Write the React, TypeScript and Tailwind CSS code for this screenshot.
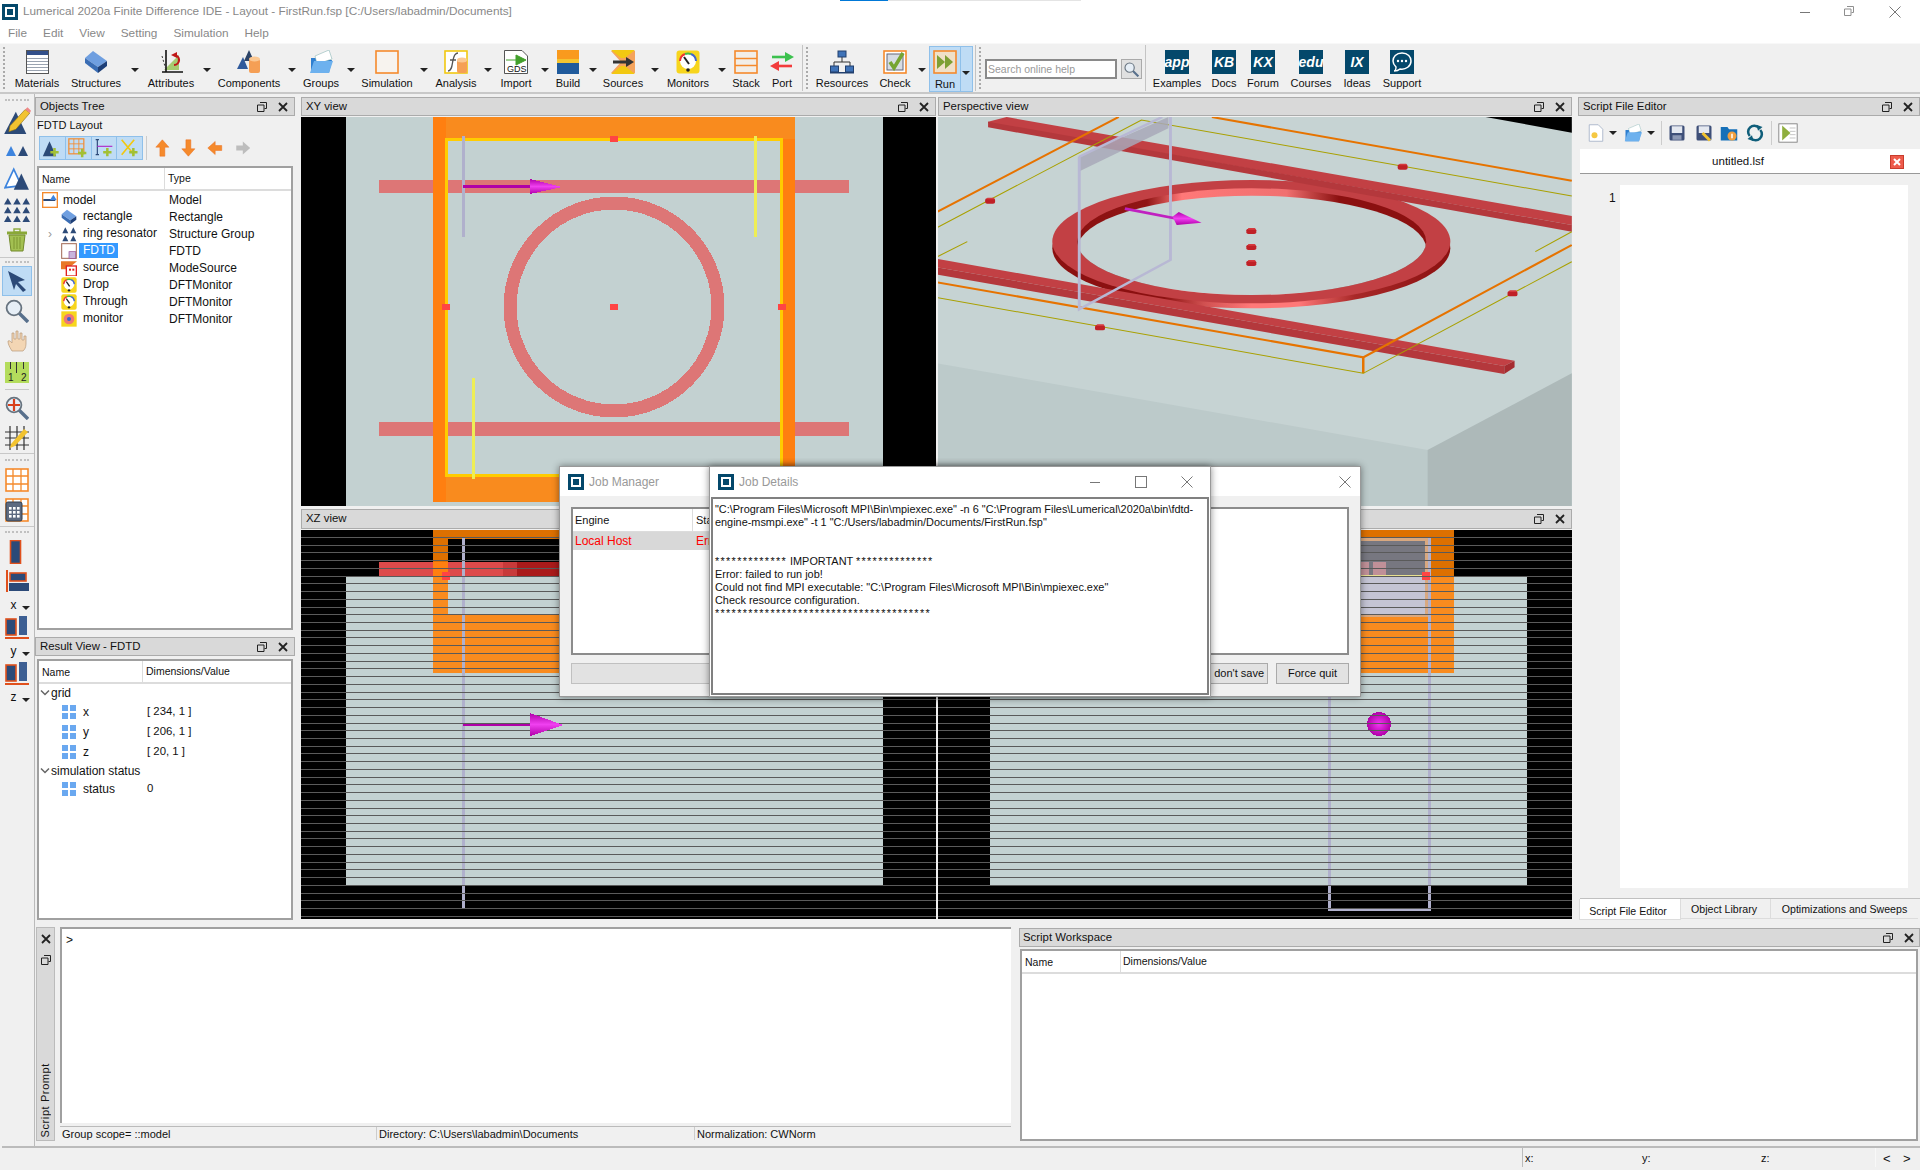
import React from 'react';

const Svg = ({ s = 24, v = 24, children, className }: { s?: number; v?: number; children: React.ReactNode; className?: string }) => (
  <svg width={s} height={s} viewBox={`0 0 ${v} ${v}`} className={`block shrink-0 ${className ?? ''}`}>{children}</svg>
);

const Logo = ({ s = 16 }: { s?: number }) => (
  <Svg s={s} v={16}>
    <rect width="16" height="16" fill="#04486b" />
    <rect x="3" y="3" width="10" height="10" fill="#fff" />
    <rect x="5" y="5" width="6" height="6" fill="#04486b" />
  </Svg>
);

// Toolbar icons
const Materials = () => (
  <Svg>
    <rect x="1.5" y="0.5" width="22" height="23" fill="#fff" stroke="#555" />
    <rect x="2" y="1" width="21" height="4" fill="#33508a" />
    {[8, 11, 14, 17, 20].map(y => <rect key={y} x="2" y={y} width="21" height="1" fill="#9aa3b0" />)}
  </Svg>
);
const Cuboid = ({ s = 24 }: { s?: number }) => (
  <Svg s={s}>
    <polygon points="1,8 9,1 23,11 14,17" fill="#6f9fe0" />
    <polygon points="1,8 14,17 14,23 1,13" fill="#3a6db4" />
    <polygon points="14,17 23,11 23,16 14,23" fill="#1d3f78" />
  </Svg>
);
const Attributes = () => (
  <Svg>
    <polygon points="5,20 20,20 20,5" fill="#a6cc70" />
    <path d="M7 0V22M3 22H24" stroke="#111" strokeWidth="1.6" fill="none" />
    <path d="M3 6L7 20" stroke="#333" strokeDasharray="2 2" fill="none" />
    <path d="M15 5A5 5 0 1 1 15 15" stroke="#c01818" strokeWidth="2.2" fill="none" />
    <polygon points="12,5 18,2 18,8" fill="#c01818" />
  </Svg>
);
const Components = () => (
  <Svg>
    <polygon points="0,19 6,7 11,19" fill="#2f5a9c" />
    <polygon points="7,11 12,0 17,11" fill="#2c4468" />
    <rect x="12" y="9" width="11" height="14" rx="2" fill="#f59f55" />
    <ellipse cx="17.5" cy="9" rx="5.5" ry="2.5" fill="#fbc893" />
  </Svg>
);
const Folder = ({ s = 24 }: { s?: number }) => (
  <Svg s={s}>
    <polygon points="2,8 2,23 20,23 23,10 10,10 8,8" fill="#2f7fd0" />
    <polygon points="6,6 20,0 23,9 8,14" fill="#fff" stroke="#7aa" strokeWidth=".5" />
    <polygon points="1,23 5,11 24,11 20,23" fill="#6db1ee" />
  </Svg>
);
const Simulation = () => (
  <Svg>
    <rect x="1" y="1" width="22" height="22" fill="#f7f3ee" stroke="#f58a2c" strokeWidth="1.6" />
  </Svg>
);
const Analysis = () => (
  <Svg>
    <rect x="1" y="1" width="22" height="22" fill="#fff" stroke="#f2c811" strokeWidth="1.6" />
    <path d="M4 21C8 21 8 15 9 10S11 3 14 3M6 10H12" stroke="#555" strokeWidth="1.3" fill="none" />
    <rect x="13" y="10" width="10" height="13" rx="2" fill="#f59f55" />
    <ellipse cx="18" cy="10" rx="5" ry="2.5" fill="#fbc893" />
  </Svg>
);
const Import = () => (
  <div className="relative w-6 h-6">
    <Svg>
      <polygon points="0.5,0.5 18,0.5 23.5,6 23.5,23.5 0.5,23.5" fill="#fff" stroke="#555" />
      <path d="M2 10H12V5L22 10L12 15V10" fill="#43a02c" stroke="#43a02c" />
    </Svg>
    <span className="absolute left-[3px] top-[14px] text-[9px] leading-[10px]">GDS</span>
  </div>
);
const Build = () => (
  <Svg>
    <rect x="1" y="0" width="22" height="12" fill="#f99a1e" />
    <rect x="1" y="9" width="22" height="4" fill="#f4c430" />
    <rect x="1" y="13" width="22" height="11" fill="#1f5a9c" />
  </Svg>
);
const Sources = () => (
  <Svg>
    <polygon points="0,1 24,1 24,23 0,23 10,12" fill="#f5a35c" />
    <polygon points="0,0 24,0 14,8 10,8" fill="#f2c811" />
    <polygon points="0,24 24,24 14,16 10,16" fill="#f2c811" />
    <path d="M2 12H16" stroke="#333" strokeWidth="3" />
    <polygon points="15,7 23,12 15,17" fill="#333" />
  </Svg>
);
const Gauge = ({ s = 24 }: { s?: number }) => (
  <Svg s={s}>
    <rect x="0.5" y="0.5" width="23" height="23" rx="3" fill="#f7d51d" />
    <circle cx="12" cy="11" r="8" fill="#fff" />
    <path d="M4 11A8 8 0 0 1 9 4" stroke="#e33" strokeWidth="2" fill="none" />
    <path d="M9 4A8 8 0 0 1 15 4" stroke="#4b4" strokeWidth="2" fill="none" />
    <path d="M15 4A8 8 0 0 1 20 11" stroke="#46c" strokeWidth="2" fill="none" />
    <path d="M8 7L13 14" stroke="#222" strokeWidth="2" />
    <circle cx="12" cy="20" r="1.8" fill="#222" />
  </Svg>
);
const Stack = () => (
  <Svg>
    <rect x="1" y="1" width="22" height="22" fill="#f2eee8" stroke="#f58a2c" strokeWidth="1.6" />
    <path d="M1 8.5H23M1 15.5H23" stroke="#f58a2c" strokeWidth="1.6" />
  </Svg>
);
const Port = () => (
  <Svg>
    <path d="M2 7H16" stroke="#3cc14e" strokeWidth="2.6" />
    <polygon points="15,2 24,7 15,12" fill="#3cc14e" />
    <path d="M8 16H22" stroke="#f23b3b" strokeWidth="2.6" />
    <polygon points="9,11 0,16 9,21" fill="#f23b3b" />
  </Svg>
);
const Resources = () => (
  <Svg>
    <path d="M12 6V12M4 18V12H20V18" stroke="#333" fill="none" />
    <rect x="8" y="1" width="8" height="6" fill="#3f73b8" stroke="#22406e" />
    <rect x="0.5" y="16" width="8" height="6" fill="#3f73b8" stroke="#22406e" />
    <rect x="15.5" y="16" width="8" height="6" fill="#3f73b8" stroke="#22406e" />
    <rect x="0" y="22" width="24" height="1.5" fill="#22406e" />
  </Svg>
);
const Check = () => (
  <Svg>
    <rect x="1" y="1" width="22" height="22" fill="#fff" stroke="#f58a2c" strokeWidth="1.6" />
    <rect x="4" y="4" width="16" height="16" fill="#d7dce4" stroke="#667" />
    <path d="M7 12L11 18L20 3" stroke="#76a532" strokeWidth="3.6" fill="none" />
  </Svg>
);
const RunIcon = () => (
  <Svg>
    <rect x="1" y="1" width="22" height="22" fill="#f0e0c8" stroke="#f58a2c" strokeWidth="1.6" />
    <polygon points="4,5 12,12 4,19" fill="#7e9f34" />
    <polygon points="12,5 20,12 12,19" fill="#7e9f34" />
  </Svg>
);
const Mag = ({ s = 24 }: { s?: number }) => (
  <Svg s={s}>
    <path d="M14 14L23 23" stroke="#58708c" strokeWidth="3.4" />
    <circle cx="9" cy="9" r="7.4" fill="#e6eef6" stroke="#67737f" strokeWidth="1.8" />
  </Svg>
);
const Square = ({ t }: { t: string }) => (
  <div className="w-6 h-6 bg-[#04486b] flex items-center justify-center text-white font-bold italic text-[14px] leading-none">{t}</div>
);
const Support = () => (
  <Svg>
    <rect width="24" height="24" fill="#04486b" />
    <path d="M12 3C6 3 3 7 3 11C3 14 5 16 6 17C6 19 5 21 4 21C7 21 9 20 10 19C16 20 21 16 21 11C21 7 18 3 12 3Z" fill="none" stroke="#fff" strokeWidth="1.5" />
    <circle cx="8" cy="11" r="1.2" fill="#fff" /><circle cx="12" cy="11" r="1.2" fill="#fff" /><circle cx="16" cy="11" r="1.2" fill="#fff" />
  </Svg>
);

// Left toolbar icons
const Tri = ({ x, y, w, h, fill }: { x: number; y: number; w: number; h: number; fill: string }) => (
  <polygon points={`${x},${y + h} ${x + w / 2},${y} ${x + w},${y + h}`} fill={fill} />
);
const PencilTri = () => (
  <Svg s={28}>
    <polygon points="1,24 11,5 20,24" fill="#2c4a78" />
    <path d="M6 17L19 3L23 6L11 20L5 22Z" fill="#f2c330" stroke="#8a6a10" strokeWidth=".5" />
    <path d="M19 3L21 1L24 4L23 6Z" fill="#e88" />
  </Svg>
);
const TwoTri = () => (
  <Svg s={24}>
    <Tri x={1} y={8} w={10} h={10} fill="#3d84de" />
    <Tri x={13} y={8} w={10} h={10} fill="#2c4a78" />
  </Svg>
);
const OutTri = () => (
  <Svg s={26} v={24}>
    <polygon points="1,20 9,3 16,18" fill="#fff" stroke="#3d84de" strokeWidth="1.6" />
    <Tri x={9} y={7} w={14} h={15} fill="#2c4a78" />
  </Svg>
);
const ManyTri = () => (
  <Svg s={26} v={24}>
    {[1, 9, 17].map(y => [0, 8.5, 17].map(x => <Tri key={`${x}${y}`} x={x} y={y} w={7} h={6} fill="#2c4a78" />))}
  </Svg>
);
const Trash = () => (
  <Svg s={24}>
    <path d="M2 5H22" stroke="#8aa838" strokeWidth="3" />
    <rect x="9" y="1" width="6" height="3" fill="none" stroke="#8aa838" strokeWidth="1.4" />
    <polygon points="4,7 20,7 18,23 6,23" fill="#a3c052" stroke="#728a2a" />
    <path d="M9 9V21M12 9V21M15 9V21" stroke="#7c9530" />
  </Svg>
);
const Pointer = () => (
  <Svg s={24}>
    <polygon points="3,2 20,11 13,13 21,21 18,23 11,15 9,21" fill="#2c4a78" />
  </Svg>
);
const Hand = () => (
  <Svg s={24}>
    <path d="M7 22C4 17 3 15 3 12C5 11 6 13 7 14V4H9V10H11V2H13V10H15V4H17V11H19V7H21V15C21 19 19 21 18 22Z" fill="#f3d6b4" stroke="#b89a7a" strokeWidth=".7" />
  </Svg>
);
const Ruler = () => (
  <div className="relative w-6 h-[21px] bg-[#b4dc5c]">
    <div className="absolute left-[5px] top-0 w-px h-[7px] bg-[#333]" />
    <div className="absolute left-[11px] top-0 w-px h-[11px] bg-[#333]" />
    <div className="absolute left-[18px] top-0 w-px h-[7px] bg-[#333]" />
    <span className="absolute left-[3px] bottom-0 text-[10px] leading-[11px] text-[#222]">1</span>
    <span className="absolute left-[16px] bottom-0 text-[10px] leading-[11px] text-[#222]">2</span>
  </div>
);
const MagMove = () => (
  <Svg s={24}>
    <path d="M14 14L23 23" stroke="#58708c" strokeWidth="3.4" />
    <circle cx="9" cy="9" r="7.4" fill="#e6eef6" stroke="#67737f" strokeWidth="1.8" />
    <path d="M9 3V15M3 9H15" stroke="#d8401c" strokeWidth="2.2" />
  </Svg>
);
const GridPencil = () => (
  <Svg s={24}>
    <path d="M0 6H24M0 12H24M0 19H24M5 0V24M12 0V24M19 0V24" stroke="#333" strokeWidth="1.2" />
    <path d="M6 18L19 3L23 6L10 20L5 22Z" fill="#f2c330" />
  </Svg>
);
const OrangeGrid = ({ calc }: { calc?: boolean }) => (
  <Svg s={24}>
    <rect x="1" y="1" width="22" height="22" fill="#fff" stroke="#f58a2c" strokeWidth="1.6" />
    <path d="M8 1V23M16 1V23M1 8H23M1 16H23" stroke="#f58a2c" strokeWidth="1.3" />
    {calc && (
      <>
        <rect x="1" y="4" width="16" height="19" rx="2" fill="#5d6a80" stroke="#333e50" />
        {[9, 13, 17].map(y => [4, 8, 12].map(x => <rect key={`${x}${y}`} x={x} y={y} width="2.6" height="2.6" fill="#fff" />))}
      </>
    )}
  </Svg>
);
const Bars = ({ kind }: { kind: number }) => (
  <Svg s={24}>
    {kind === 0 && <rect x="5.5" y="0.5" width="10" height="23" fill="#2c4a78" stroke="#e0501c" strokeWidth="1.6" />}
    {kind === 1 && (
      <>
        <rect x="1" y="0" width="2" height="22" fill="#e0501c" />
        <rect x="5" y="3" width="16" height="8" fill="#2c4a78" stroke="#e0501c" strokeWidth="1.6" />
        <rect x="4" y="13" width="20" height="8" fill="#2c4a78" />
      </>
    )}
    {kind === 2 && (
      <>
        <rect x="1" y="3" width="10" height="16" fill="#2c4a78" stroke="#e0501c" strokeWidth="1.6" />
        <rect x="14" y="0" width="8" height="19" fill="#3d5f93" />
        <rect x="0" y="21" width="24" height="2" fill="#e0501c" />
      </>
    )}
  </Svg>
);

const Grip = () => <div className="w-[3px] self-center h-[42px] border-l-2 border-dotted border-[#aaa]" />;
const Sep = () => <div className="self-center w-px h-[46px] bg-[#c4c4c4]" />;
const Caret = ({ className }: { className?: string }) => (
  <div className={`self-start mt-[24px] w-[10px] flex justify-center ${className ?? ''}`}>
    <div className="border-x-[4px] border-t-[4px] border-x-transparent border-t-[#222]" />
  </div>
);
const Tool = ({ icon, label, className }: { icon: React.ReactNode; label: string; className: string }) => (
  <div className={`flex flex-col items-center pt-[6px] shrink-0 ${className}`}>
    {icon}
    <span className="mt-[2px] whitespace-nowrap leading-[14px]">{label}</span>
  </div>
);

const TopToolbar = () => (
  <div className="h-[51px] flex bg-[#f0f0f0] border-b-2 border-t border-t-[#f8f8f8] border-b-[#c8c8c8] text-[11px] pl-[3px]">
    <Grip />
    <Tool className="w-[46px] ml-[8px]" icon={<Materials />} label="Materials" />
    <Tool className="w-[60px] ml-[6px]" icon={<Cuboid />} label="Structures" />
    <Caret className="ml-[4px]" />
    <Tool className="w-[54px] ml-[4px]" icon={<Attributes />} label="Attributes" />
    <Caret className="ml-[4px]" />
    <Tool className="w-[70px] ml-[2px]" icon={<Components />} label="Components" />
    <Caret className="ml-[3px]" />
    <Tool className="w-[36px] ml-[6px]" icon={<Folder />} label="Groups" />
    <Caret className="ml-[7px]" />
    <Tool className="w-[52px] ml-[5px]" icon={<Simulation />} label="Simulation" />
    <Caret className="ml-[6px]" />
    <Tool className="w-[42px] ml-[6px]" icon={<Analysis />} label="Analysis" />
    <Caret className="ml-[6px]" />
    <Tool className="w-[34px] ml-[6px]" icon={<Import />} label="Import" />
    <Caret className="ml-[7px]" />
    <Tool className="w-[24px] ml-[6px]" icon={<Build />} label="Build" />
    <Caret className="ml-[8px]" />
    <Tool className="w-[42px] ml-[4px]" icon={<Sources />} label="Sources" />
    <Caret className="ml-[6px]" />
    <Tool className="w-[46px] ml-[5px]" icon={<Gauge />} label="Monitors" />
    <Caret className="ml-[6px]" />
    <Tool className="w-[34px] ml-[2px]" icon={<Stack />} label="Stack" />
    <Tool className="w-[24px] ml-[7px]" icon={<Port />} label="Port" />
    <div className="ml-[8px] flex"><Sep /></div>
    <div className="ml-[3px] flex"><Grip /></div>
    <Tool className="w-[54px] ml-[6px]" icon={<Resources />} label="Resources" />
    <Tool className="w-[34px] ml-[9px]" icon={<Check />} label="Check" />
    <Caret className="ml-[5px]" />
    <div className="ml-[2px] mt-[2px] w-[44px] h-[46px] flex bg-[#bfdcf5] border border-[#8fc0ea] shrink-0">
      <div className="w-[31px] flex flex-col items-center pt-[3px] border-r border-[#8fc0ea]">
        <RunIcon />
        <span className="mt-[3px] leading-[14px]">Run</span>
      </div>
      <Caret />
    </div>
    <div className="ml-[2px] flex"><Sep /></div>
    <div className="ml-[3px] flex"><Grip /></div>
    <div className="ml-[3px] mt-[15px] w-[132px] h-[20px] shrink-0 bg-white border-2 border-[#8a8a8a] text-[#999] text-[10.5px] pl-[1px] leading-[16px]">Search online help</div>
    <div className="ml-[4px] mt-[15px] w-[21px] h-[20px] shrink-0 bg-[#e0e0e0] border border-[#aaa] flex items-center justify-center"><Mag s={15} /></div>
    <div className="ml-[3px] flex"><Sep /></div>
    <Tool className="w-[50px] ml-[6px]" icon={<Square t="app" />} label="Examples" />
    <Tool className="w-[28px] ml-[8px]" icon={<Square t="KB" />} label="Docs" />
    <Tool className="w-[34px] ml-[8px]" icon={<Square t="KX" />} label="Forum" />
    <Tool className="w-[42px] ml-[10px]" icon={<Square t="edu" />} label="Courses" />
    <Tool className="w-[30px] ml-[10px]" icon={<Square t="IX" />} label="Ideas" />
    <Tool className="w-[42px] ml-[9px]" icon={<Support />} label="Support" />
  </div>
);

const LeftCell = ({ h, children, active }: { h: string; children: React.ReactNode; active?: boolean }) => (
  <div className={`${h} flex items-center justify-center shrink-0 ${active ? 'bg-[#bfdcf5] border border-[#8fc0ea] mx-[2px]' : ''}`}>{children}</div>
);
const Dots = () => <div className="w-[24px] border-t-2 border-dotted border-[#c0c0c0]" />;
const AxisLabel = ({ t }: { t: string }) => (
  <div className="h-[16px] flex items-center justify-center gap-[5px] pl-[6px] text-[12px] leading-none">
    {t}
    <div className="mt-[6px] border-x-[4px] border-t-[4px] border-x-transparent border-t-[#222]" />
  </div>
);
const LeftToolbar = () => (
  <div className="w-[35px] shrink-0 border-r border-[#bbb] flex flex-col pt-[2px]">
    <LeftCell h="h-[8px]"><Dots /></LeftCell>
    <LeftCell h="h-[32px]"><PencilTri /></LeftCell>
    <LeftCell h="h-[28px]"><TwoTri /></LeftCell>
    <LeftCell h="h-[30px]"><OutTri /></LeftCell>
    <LeftCell h="h-[32px]"><ManyTri /></LeftCell>
    <LeftCell h="h-[28px]"><Trash /></LeftCell>
    <div className="h-[4px] border-b border-[#c8c8c8]" />
    <LeftCell h="h-[8px]"><Dots /></LeftCell>
    <LeftCell h="h-[30px]" active><Pointer /></LeftCell>
    <LeftCell h="h-[30px]"><Mag /></LeftCell>
    <LeftCell h="h-[30px]"><Hand /></LeftCell>
    <LeftCell h="h-[32px]"><Ruler /></LeftCell>
    <div className="h-[2px] mx-[5px] border-b border-[#c8c8c8]" />
    <LeftCell h="h-[36px]"><MagMove /></LeftCell>
    <LeftCell h="h-[24px]"><GridPencil /></LeftCell>
    <div className="h-[4px] border-b border-[#c8c8c8]" />
    <LeftCell h="h-[12px]"><Dots /></LeftCell>
    <LeftCell h="h-[28px]"><OrangeGrid /></LeftCell>
    <LeftCell h="h-[32px]"><OrangeGrid calc /></LeftCell>
    <div className="h-px border-b border-[#c8c8c8]" />
    <LeftCell h="h-[10px]"><Dots /></LeftCell>
    <LeftCell h="h-[30px]"><Bars kind={0} /></LeftCell>
    <LeftCell h="h-[30px]"><Bars kind={1} /></LeftCell>
    <AxisLabel t="x" />
    <LeftCell h="h-[30px]"><Bars kind={2} /></LeftCell>
    <AxisLabel t="y" />
    <LeftCell h="h-[30px]"><Bars kind={2} /></LeftCell>
    <AxisLabel t="z" />
  </div>
);

const Restore = ({ className }: { className?: string }) => (
  <svg width="10" height="10" viewBox="0 0 10 10" className={`block shrink-0 ${className ?? ''}`}>
    <path d="M3 .5H9.5V6.5H7.5M.5 3H7V9.5H.5Z" fill="none" stroke="#222" />
  </svg>
);
const XMark = ({ className }: { className?: string }) => (
  <svg width="10" height="10" viewBox="0 0 10 10" className={`block shrink-0 ${className ?? ''}`}>
    <path d="M1 1L9 9M9 1L1 9" stroke="#222" strokeWidth="1.8" />
  </svg>
);
const PanelTitle = ({ title, className }: { title: string; className?: string }) => (
  <div className={`h-[19px] shrink-0 flex items-center bg-[#d9d9d9] border border-[#ababab] px-[4px] text-[11.4px] leading-none ${className ?? ''}`}>
    <span className="flex-1 whitespace-nowrap">{title}</span>
    <Restore className="mr-[11px]" />
    <XMark className="mr-[2px]" />
  </div>
);

const TreeIcon = ({ kind }: { kind: string }) => {
  if (kind === 'rect') return <Cuboid s={16} />;
  if (kind === 'group') return <Svg s={16} v={24}>{[2, 14].map(y => [2, 14].map(x => <Tri key={`${x}${y}`} x={x} y={y} w={9} h={9} fill="#2c4a78" />))}</Svg>;
  if (kind === 'fdtd') return <Svg s={16}><rect x="1" y="1" width="22" height="22" fill="#fff" stroke="#a6705c" strokeWidth="1.6" /><rect x="12" y="13" width="10" height="10" fill="#c8b4dc" stroke="#924d92" /></Svg>;
  if (kind === 'source') return <Svg s={16}><polygon points="0,2 24,2 14,10 24,14 0,14" fill="#e87826" /><rect x="8" y="9" width="15" height="15" fill="#fff" stroke="#e02020" strokeWidth="2" /><rect x="12" y="13" width="3" height="3" fill="#e02020" /><rect x="17" y="13" width="3" height="3" fill="#e02020" /></Svg>;
  if (kind === 'monitor') return <Svg s={16}><rect x="0.5" y="0.5" width="23" height="23" fill="#f7d51d" /><circle cx="12" cy="12" r="8" fill="#ee7777" /><circle cx="12" cy="12" r="3" fill="#3366cc" /></Svg>;
  return <Gauge s={16} />;
};

const TreeRow = ({ icon, name, type, arrow, selected }: { icon: string; name: string; type: string; arrow?: boolean; selected?: boolean }) => (
  <div className="h-[17px] flex items-center">
    <div className="w-[22px] flex justify-center text-[#999] text-[12px]">{arrow ? '›' : ''}</div>
    <TreeIcon kind={icon} />
    <span className="ml-[2px] w-[90px] px-[4px] leading-[15px] whitespace-nowrap">
      {selected ? <span className="inline-block bg-[#3399ff] text-white w-[39px] -ml-[4px] pl-[4px]">{name}</span> : name}
    </span>
    <span>{type}</span>
  </div>
);

const ObjectsTree = () => (
  <div className="h-[533px] flex flex-col">
    <PanelTitle title="Objects Tree" />
    <div className="h-[19px] pl-[2px] leading-[19px] text-[11px]">FDTD Layout</div>
    <div className="h-[24px] mt-px flex items-center pl-[4px]">
      <div className="flex h-[24px] bg-[#bfdcf5] border border-[#8fc0ea] w-[104px]">
        <div className="w-[26px] flex justify-center items-center border-r border-[#8fc0ea]"><Svg s={20}><Tri x={1} y={4} w={16} h={18} fill="#2c4a78" /><path d="M15 12V22M10 17H20" stroke="#a2c035" strokeWidth="3" /></Svg></div>
        <div className="w-[26px] flex justify-center items-center border-r border-[#8fc0ea]"><Svg s={20}><rect x="1" y="1" width="18" height="18" fill="none" stroke="#f58a2c" strokeWidth="1.4" /><path d="M7 1V19M13 1V19M1 7H19M1 13H19" stroke="#f58a2c" /><path d="M17 13V23M12 18H22" stroke="#a2c035" strokeWidth="3" /></Svg></div>
        <div className="w-[26px] flex justify-center items-center border-r border-[#8fc0ea]"><Svg s={20}><path d="M4 2V20M2 2H6M2 20H6" stroke="#2c4a78" strokeWidth="1.4" /><path d="M4 10H22" stroke="#b030c8" strokeWidth="1.4" /><path d="M16 12V22M11 17H21" stroke="#a2c035" strokeWidth="3" /></Svg></div>
        <div className="w-[25px] flex justify-center items-center"><Svg s={20}><path d="M2 2L17 20M17 2L2 20" stroke="#f2c811" strokeWidth="2" /><path d="M16 12V22M11 17H21" stroke="#a2c035" strokeWidth="3" /></Svg></div>
      </div>
      <div className="ml-[3px] w-px h-[24px] bg-[#ccc]" />
      {['M9 1L17 10H12V21H6V10H1Z', 'M6 1H12V12H17L9 21L1 12H6Z', 'M1 11L10 3V8H18V14H10V19Z'].map(d => (
        <Svg key={d} s={18} v={22} className="ml-[8px]"><path d={d} fill="#f58a2c" stroke="#ea6a18" strokeWidth=".6" /></Svg>
      ))}
      <Svg s={18} v={22} className="ml-[8px]"><path d="M21 11L12 3V8H4V14H12V19Z" fill="#bdbdbd" /></Svg>
    </div>
    <div className="mt-[6px] ml-[2px] w-[256px] flex-1 bg-white border-2 border-[#a0a0a0]">
      <div className="h-[23px] flex items-center border-b-2 border-[#dcdcdc] text-[10.5px]">
        <span className="w-[126px] pl-[3px] border-r border-[#dcdcdc] h-full leading-[22px]">Name</span>
        <span className="pl-[3px]">Type</span>
      </div>
      <div>
        <div className="h-[17px] flex items-center">
          <div className="w-[3px]" />
          <Svg s={16}><rect x="1" y="1" width="22" height="22" fill="#fff" stroke="#f58a2c" strokeWidth="2" /><path d="M2 12H20" stroke="#2c4a78" strokeWidth="3" /><Tri x={12} y={4} w={10} h={8} fill="#3d84de" /></Svg>
          <span className="ml-[5px] w-[106px]">model</span>
          <span>Model</span>
        </div>
        <TreeRow icon="rect" name="rectangle" type="Rectangle" />
        <TreeRow icon="group" name="ring resonator" type="Structure Group" arrow />
        <TreeRow icon="fdtd" name="FDTD" type="FDTD" selected />
        <TreeRow icon="source" name="source" type="ModeSource" />
        <TreeRow icon="gauge" name="Drop" type="DFTMonitor" />
        <TreeRow icon="gauge" name="Through" type="DFTMonitor" />
        <TreeRow icon="monitor" name="monitor" type="DFTMonitor" />
      </div>
    </div>
  </div>
);

const Chev = () => (
  <svg width="10" height="8" viewBox="0 0 10 8" className="block shrink-0"><path d="M1 1.5L5 5.5L9 1.5" fill="none" stroke="#666" strokeWidth="1.5" /></svg>
);
const ResultLeaf = ({ name, value, h }: { name: string; value: string; h: string }) => (
  <div className={`${h} flex items-center pl-[23px]`}>
    <div className="grid grid-cols-2 gap-[2px] w-[14px] h-[14px] shrink-0">
      <div className="bg-[#6aa8f0]" /><div className="bg-[#6aa8f0]" /><div className="bg-[#6aa8f0]" /><div className="bg-[#6aa8f0]" />
    </div>
    <span className="ml-[7px] w-[64px]">{name}</span>
    <span className="text-[11.4px]">{value}</span>
  </div>
);
const ResultBranch = ({ name, h }: { name: string; h: string }) => (
  <div className={`${h} flex items-center pl-[1px]`}>
    <Chev /><span className="ml-[1px]">{name}</span>
  </div>
);
const ResultView = () => (
  <div className="flex-1 flex flex-col mt-[7px]">
    <PanelTitle title="Result View - FDTD" />
    <div className="mt-[3px] mb-px ml-[2px] w-[256px] flex-1 bg-white border-2 border-[#a0a0a0]">
      <div className="h-[23px] flex items-center border-b-2 border-[#dcdcdc] text-[10.5px]">
        <span className="w-[104px] pl-[3px] border-r border-[#dcdcdc] h-full leading-[22px]">Name</span>
        <span className="pl-[3px]">Dimensions/Value</span>
      </div>
      <ResultBranch name="grid" h="h-[18px]" />
      <ResultLeaf name="x" value="[ 234, 1 ]" h="h-[20px]" />
      <ResultLeaf name="y" value="[ 206, 1 ]" h="h-[20px]" />
      <ResultLeaf name="z" value="[ 20, 1 ]" h="h-[20px]" />
      <ResultBranch name="simulation status" h="h-[17px]" />
      <ResultLeaf name="status" value="0" h="h-[19px]" />
    </div>
  </div>
);

const Defs = () => (
  <defs>
    <linearGradient id="head" x1="0" y1="0" x2="0" y2="1">
      <stop offset="0" stopColor="#b000a8" />
      <stop offset=".5" stopColor="#f040f0" />
      <stop offset="1" stopColor="#b000a8" />
    </linearGradient>
    <radialGradient id="ball">
      <stop offset="0" stopColor="#f038f0" />
      <stop offset="1" stopColor="#b000a8" />
    </radialGradient>
    <linearGradient id="ringOut" x1="0" y1="0" x2="1" y2="0">
      <stop offset="0" stopColor="#8b1010" />
      <stop offset=".28" stopColor="#8b1010" />
      <stop offset=".38" stopColor="#d05050" />
      <stop offset=".5" stopColor="#ff7878" />
      <stop offset=".62" stopColor="#ff7878" />
      <stop offset=".76" stopColor="#a82828" />
      <stop offset="1" stopColor="#8b1010" />
    </linearGradient>
    <linearGradient id="ringIn" x1="0" y1="0" x2="1" y2="0">
      <stop offset="0" stopColor="#8b1010" />
      <stop offset=".2" stopColor="#901515" />
      <stop offset=".3" stopColor="#ff7878" />
      <stop offset=".6" stopColor="#f07070" />
      <stop offset=".75" stopColor="#8b1010" />
      <stop offset="1" stopColor="#8b1010" />
    </linearGradient>
    <clipPath id="holeClip"><ellipse cx="776" cy="395" rx="421" ry="160" /></clipPath>
  </defs>
);

const Handle = ({ x, y }: { x: number; y: number }) => <rect x={x - 4} y={y - 3} width="8" height="6" fill="#ff4444" />;

const XYDrawing = () => (
  <svg viewBox="301 117 635 389" className="block w-[635px] h-[389px]" shapeRendering="crispEdges">
    <Defs />
    <rect x="301" y="117" width="635" height="389" fill="#000" />
    <rect x="346" y="117" width="537" height="389" fill="#c3d1d1" />
    <rect x="433" y="117" width="362" height="385" fill="#f98b1e" />
    <rect x="433" y="117" width="13" height="385" fill="#ff7f10" />
    <rect x="782" y="139" width="13" height="363" fill="#ff7f10" />
    <rect x="446" y="139" width="336" height="336" fill="#c3d1d1" />
    <rect x="379" y="180" width="470" height="13" fill="#dd7676" />
    <rect x="379" y="422" width="470" height="14" fill="#dd7676" />
    {[180, 422].map(y => (
      <g key={y}>
        <rect x="433" y={y} width="13" height="14" fill="#ff7f10" />
        <rect x="782" y={y} width="13" height="14" fill="#ff7f10" />
      </g>
    ))}
    <circle cx="614" cy="307" r="104" fill="none" stroke="#dd7676" strokeWidth="13" />
    <rect x="446.5" y="139.5" width="335" height="335.5" fill="none" stroke="#ffcc00" strokeWidth="3" />
    <rect x="462" y="136" width="3" height="101" fill="#b0b0cc" />
    <rect x="754" y="136" width="3" height="101" fill="#eeee55" />
    <rect x="472" y="378" width="3" height="101" fill="#eeee55" />
    <Handle x={614} y={139} /><Handle x={446} y={307} /><Handle x={782} y={307} /><Handle x={614} y={307} />
    <rect x="463" y="185" width="68" height="3" fill="#b000a8" />
    <polygon points="530,179 562,187 530,194" fill="url(#head)" />
  </svg>
);

const Stripes = ({ x }: { x: number }) => (
  <>
    {Array.from({ length: 50 }, (_, i) => (
      <rect key={i} x={x} y={537 + Math.round(i * 7.73)} width="636" height="1" fill="#5a5a5a" />
    ))}
  </>
);

const XZDrawing = () => (
  <svg viewBox="301 530 635 389" className="block w-[635px] h-[389px]" shapeRendering="crispEdges">
    <Defs />
    <rect x="301" y="530" width="635" height="389" fill="#000" />
    <rect x="346" y="577" width="537" height="309" fill="#c3d1d1" />
    <rect x="379" y="562" width="260" height="14" fill="#dd4a4a" />
    <rect x="503" y="562" width="14" height="14" fill="#c83a3a" />
    <rect x="517" y="562" width="46" height="14" fill="#aa1a1a" />
    <rect x="433" y="530" width="362" height="9" fill="#dd7000" />
    <rect x="433" y="539" width="15" height="38" fill="#dd7000" />
    <rect x="433" y="562" width="15" height="14" fill="#ff7f10" />
    <rect x="433" y="577" width="15" height="37" fill="#f98b1e" />
    <rect x="433" y="614" width="362" height="59" fill="#f98b1e" />
    <rect x="448" y="576" width="334" height="1" fill="#e8e040" />
    <rect x="462" y="538" width="3" height="371" fill="#b0b0cc" />
    <rect x="442" y="572" width="8" height="8" fill="#ff4444" />
    <Stripes x={301} />
    <rect x="463" y="724" width="68" height="2" fill="#b000a8" />
    <polygon points="530,713 563,725 530,736" fill="url(#head)" />
  </svg>
);

const YZDrawing = () => (
  <svg viewBox="938 530 634 389" className="block w-[634px] h-[389px]" shapeRendering="crispEdges">
    <Defs />
    <rect x="938" y="530" width="634" height="389" fill="#000" />
    <rect x="990" y="577" width="537" height="309" fill="#c3d1d1" />
    <rect x="1062" y="530" width="392" height="47" fill="#dd7000" />
    <rect x="1062" y="577" width="392" height="96" fill="#f98b1e" />
    <rect x="1062" y="538" width="367" height="79" fill="#d8a880" />
    <rect x="1062" y="541" width="363" height="36" fill="#777780" />
    <rect x="1062" y="577" width="363" height="37" fill="#c4c4d4" />
    <rect x="1360" y="562" width="9" height="13" fill="#c09098" />
    <rect x="1373" y="562" width="13" height="13" fill="#c09098" />
    <rect x="1062" y="575" width="363" height="1" fill="#e8e090" />
    <rect x="1328" y="538" width="3" height="372" fill="#b0b0cc" />
    <rect x="1428" y="538" width="3" height="372" fill="#b0b0cc" />
    <rect x="1328" y="909" width="103" height="2" fill="#b0b0cc" />
    <rect x="1422" y="572" width="8" height="8" fill="#ff4444" />
    <circle cx="1379" cy="724" r="12" fill="url(#ball)" />
    <Stripes x={938} />
  </svg>
);

const DotP = ({ x, y }: { x: number; y: number }) => (
  <>
    <rect x={x - 12} y={y - 7} width="24" height="16" rx="5" fill="#c02026" />
    <rect x={x - 8} y={y - 9} width="18" height="5" rx="2" fill="#d63a3e" />
  </>
);
// drawn in the coordinates of the 2.412 x 3 crop, scaled down by the group transform
const Perspective = () => (
  <svg viewBox="938 117 634 389" className="block w-[634px] h-[389px]">
    <Defs />
    <g transform="translate(930 110) scale(0.4146 0.3333)">
      <rect x="18" y="21" width="1530" height="1167" fill="#c6d3d3" />
      <polygon points="1340,21 1548,21 1548,68" fill="#000" />
      <polygon points="18,760 1200,1020 1200,1188 18,1188" fill="#bccaca" />
      <polygon points="1200,1020 1548,790 1548,1188 1200,1188" fill="#adb9b9" />

      <ellipse cx="775" cy="415" rx="480" ry="180" fill="url(#ringOut)" />
      <ellipse cx="775" cy="395" rx="480" ry="185" fill="#c24044" />
      <ellipse cx="776" cy="395" rx="421" ry="160" fill="url(#ringIn)" />
      <ellipse cx="776" cy="417" rx="421" ry="160" fill="#c6d3d3" clipPath="url(#holeClip)" />

      <polygon points="140,35 185,21 1548,318 1548,345 140,38" fill="#c24044" />
      <polygon points="140,35 1548,345 1548,365 140,52" fill="#b4383c" />
      <polygon points="18,447 1410,752 1385,768 18,472" fill="#c24044" />
      <polygon points="18,472 1385,768 1385,792 18,494" fill="#b4383c" />
      <polygon points="1385,768 1410,752 1410,772 1385,792" fill="#a52c30" />

      <g fill="none" stroke="#e67300" strokeWidth="6">
        <path d="M18 305L455 21M680 21L1548 212M18 517L1045 742L1548 405M1045 742V790" />
      </g>
      <g fill="none" stroke="#a9a000" strokeWidth="3">
        <path d="M18 352L510 30L1548 258M18 563L1045 790L1548 455M18 440L90 395M1460 425L1548 365" />
      </g>
      <DotP x={145} y={272} /><DotP x={1140} y={170} /><DotP x={410} y={652} /><DotP x={1405} y={550} />
      <DotP x={775} y={363} /><DotP x={775} y={411} /><DotP x={775} y={459} />

      <polygon points="358,140 575,21 575,55 358,185" fill="#a8a8b8" opacity=".85" />
      <path d="M360 140V598L580 450V21M360 140L560 21" fill="none" stroke="#b8b8d4" strokeWidth="7" />
      <path d="M470 296L590 325" stroke="#c020c0" strokeWidth="8" />
      <polygon points="585,320 600,306 655,338 595,345" fill="url(#head)" />
    </g>
  </svg>
);

const View = ({ title, children, lower }: { title: string; children: React.ReactNode; lower?: boolean }) => (
  <div className="flex flex-col">
    <PanelTitle title={title} className={lower ? 'h-[20px]' : ''} />
    <div className="mt-px h-[389px]">{children}</div>
  </div>
);

const EditorToolbar = () => (
  <div className="h-[33px] shrink-0 flex items-center pl-[9px]">
    <Svg s={18}><polygon points="3,1 15,1 21,7 21,23 3,23" fill="#fff" stroke="#9aa8c0" /><circle cx="10" cy="15" r="4" fill="#f5c842" /></Svg>
    <Caret className="ml-[3px] !mt-0 !self-center" />
    <div className="ml-[6px]"><Folder s={18} /></div>
    <Caret className="ml-[4px] !mt-0 !self-center" />
    <div className="ml-[5px] w-px h-[24px] bg-[#ccc]" />
    <div className="ml-[6px]"><Svg s={18}><rect x="2" y="2" width="20" height="20" rx="2" fill="#3e4f78" /><rect x="5" y="3" width="14" height="9" fill="#e4e8f0" /><rect x="6" y="15" width="12" height="6" fill="#8c98b4" /></Svg></div>
    <div className="ml-[9px]"><Svg s={18}><rect x="2" y="2" width="20" height="20" rx="2" fill="#3e4f78" /><rect x="5" y="3" width="14" height="9" fill="#e4e8f0" /><path d="M10 12L20 22" stroke="#f2c330" strokeWidth="4" /></Svg></div>
    <div className="ml-[7px]"><Svg s={18}><polygon points="1,4 10,4 12,7 23,7 23,22 1,22" fill="#1670b8" /><circle cx="16" cy="16" r="6" fill="#f0a040" /><rect x="15" y="13" width="2" height="6" fill="#fff" /></Svg></div>
    <div className="ml-[8px]"><Svg s={18}><path d="M5 16A8 8 0 0 1 17 5M19 8A8 8 0 0 1 7 19" stroke="#0f5e7a" strokeWidth="3.4" fill="none" /><polygon points="14,1 22,4 16,9" fill="#0f5e7a" /><polygon points="10,23 2,20 8,15" fill="#0f5e7a" /></Svg></div>
    <div className="ml-[7px] w-px h-[24px] bg-[#ccc]" />
    <div className="ml-[6px]"><Svg s={20}><rect x="1" y="1" width="22" height="22" fill="#fff" stroke="#777" /><path d="M14 6H21M14 10H21M14 14H21M14 18H21" stroke="#bbb" /><polygon points="5,3 15,12 5,21" fill="#8fae3e" /></Svg></div>
  </div>
);

const ScriptEditor = () => (
  <div className="w-[342px] shrink-0 flex flex-col">
    <PanelTitle title="Script File Editor" />
    <EditorToolbar />
    <div className="ml-[2px] h-[25px] shrink-0 flex items-center pt-[2px] bg-white border-b border-[#999] relative text-[11.5px]">
      <span className="flex-1 text-center pr-[24px]">untitled.lsf</span>
      <div className="absolute right-[16px] top-[6px] w-[14px] h-[14px] bg-[#ee5b4b] border border-[#c83c2c] flex items-center justify-center">
        <svg width="8" height="8" viewBox="0 0 8 8"><path d="M1 1L7 7M7 1L1 7" stroke="#fff" strokeWidth="2" /></svg>
      </div>
    </div>
    <div className="ml-[2px] flex-1 flex border-b border-[#c0c0c0] pt-[11px] pb-[10px] pr-[12px]">
      <div className="w-[40px] pl-[29px] leading-[13px] pt-[7px]">1</div>
      <div className="flex-1 bg-white" />
    </div>
    <div className="h-[22px] shrink-0 flex text-[10.6px]">
      <div className="ml-[1px] w-[102px] h-[21px] bg-white border border-t-0 border-[#dcdcdc] text-center pr-[4px] leading-[24px]">Script File Editor</div>
      <div className="w-[90px] h-[20px] border-b border-r border-[#dcdcdc] text-center pr-[3px] leading-[20px]">Object Library</div>
      <div className="w-[147px] h-[20px] border-b border-[#dcdcdc] text-center leading-[20px]">Optimizations and Sweeps</div>
    </div>
  </div>
);

const BottomDock = () => (
  <div className="h-[214px] mt-[6px] flex">
    <div className="w-[19px] ml-[1px] bg-[#d9d9d9] border border-[#bbb] flex flex-col items-center pt-[6px] shrink-0">
      <XMark />
      <Restore className="mt-[11px]" />
      <span className="mt-auto mb-[3px] rotate-180 [writing-mode:vertical-rl] text-[11px] leading-none tracking-[0.6px]">Script Prompt</span>
    </div>
    <div className="ml-[5px] w-[951px] shrink-0 flex flex-col">
      <div className="flex-1 bg-white border-t-2 border-l-2 border-[#a0a0a0] pl-[4px] pt-[2px]">&gt;</div>
      <div className="h-[14px] mt-[3px] mb-px flex text-[11px] leading-[14px] border-t border-[#bbb]">
        <div className="w-[317px] border-r border-[#ccc] pl-[2px]">Group scope= ::model</div>
        <div className="w-[318px] border-r border-[#ccc] pl-[2px]">Directory: C:\Users\labadmin\Documents</div>
        <div className="flex-1 pl-[2px]">Normalization: CWNorm</div>
      </div>
    </div>
    <div className="ml-[8px] flex-1 flex flex-col">
      <PanelTitle title="Script Workspace" className="!px-[3px] mt-px" />
      <div className="mt-[2px] ml-px mr-[2px] flex-1 bg-white border-2 border-[#a0a0a0]">
        <div className="h-[23px] flex items-center border-b-2 border-[#dcdcdc] text-[10.5px]">
          <span className="w-[99px] pl-[3px] border-r border-[#dcdcdc] h-full leading-[22px]">Name</span>
          <span className="pl-[2px]">Dimensions/Value</span>
        </div>
      </div>
    </div>
  </div>
);

const StatusBar = () => (
  <div className="h-[21px] flex border-t-2 border-[#bbb] ml-[2px] text-[11px] leading-[21px]">
    <div className="w-[1521px] border-r border-[#bbb]" />
    <div className="w-[353px] flex border-r border-[#f8f8f8]">
      <span className="w-[119px] pl-[2px]">x:</span>
      <span className="w-[119px]">y:</span>
      <span>z:</span>
    </div>
    <span className="ml-[7px] w-[20px] text-[13px]">&lt;</span>
    <span className="text-[13px]">&gt;</span>
  </div>
);

const WinCtl = ({ className, close, max }: { className: string; close?: boolean; max?: boolean }) => (
  <svg width="12" height="12" viewBox="0 0 12 12" className={`block shrink-0 ${className}`}>
    {close ? <path d="M.5 .5L11.5 11.5M11.5 .5L.5 11.5" stroke="#777" /> : max ? <rect x=".5" y=".5" width="11" height="11" fill="none" stroke="#777" /> : <path d="M1 6.5H11" stroke="#777" />}
  </svg>
);

const JobManager = () => (
  <div className="absolute left-[559px] top-[466px] w-[802px] h-[231px] bg-[#f0f0f0] border border-[#999] shadow-[0_0_7px_rgba(0,0,0,0.45)] flex flex-col text-[11px]">
    <div className="h-[29px] bg-white flex items-center pl-[8px] shrink-0">
      <Logo />
      <span className="ml-[5px] text-[#999] text-[12px] flex-1">Job Manager</span>
      <WinCtl close className="mr-[9px]" />
    </div>
    <div className="mt-[11px] mx-[11px] h-[148px] bg-white border-2 border-[#8c8c8c]">
      <div className="h-[23px] w-[200px] flex items-center border-b border-[#dcdcdc]">
        <span className="w-[120px] pl-[2px] border-r border-[#dcdcdc] h-full leading-[22px]">Engine</span>
        <span className="pl-[3px]">Status</span>
      </div>
      <div className="h-[18px] w-[200px] bg-[#d8d8d8] text-[#ff0000] flex items-center text-[12px]">
        <span className="w-[120px] pl-[2px]">Local Host</span>
        <span className="pl-[3px]">Error</span>
      </div>
    </div>
    <div className="mt-[8px] mx-[11px] flex">
      <div className="w-[450px] h-[21px] bg-[#e2e2e2] border border-[#c0c0c0]" />
      <div className="ml-auto w-[120px] h-[21px] bg-[#e2e2e2] border border-[#aaa] text-right pr-[3px] leading-[19px] mr-[8px] whitespace-nowrap">Quit, don't save</div>
      <div className="w-[73px] h-[21px] bg-[#e2e2e2] border border-[#aaa] text-center leading-[19px]">Force quit</div>
    </div>
  </div>
);

const Stars = ({ n }: { n: number }) => <span className="tracking-[1.3px]">{'*'.repeat(n)}</span>;

const JobDetails = () => (
  <div className="absolute left-[709px] top-[466px] w-[502px] h-[231px] bg-white border border-[#999] shadow-[0_0_7px_rgba(0,0,0,0.45)] flex flex-col">
    <div className="h-[30px] flex items-center pl-[8px] shrink-0">
      <Logo />
      <span className="ml-[5px] text-[#999] text-[12px] flex-1">Job Details</span>
      <WinCtl className="mr-[34px]" />
      <WinCtl max className="mr-[34px]" />
      <WinCtl close className="mr-[17px]" />
    </div>
    <div className="flex-1 mx-[1px] mb-[1px] border-2 border-[#808080] pl-[2px] pt-[4px] text-[10.9px] leading-[13px] whitespace-nowrap">
      <div>"C:\Program Files\Microsoft MPI\Bin\mpiexec.exe" -n 6 "C:\Program Files\Lumerical\2020a\bin\fdtd-</div>
      <div>engine-msmpi.exe" -t 1 "C:/Users/labadmin/Documents/FirstRun.fsp"</div>
      <div className="h-[13px]" />
      <div className="h-[13px]" />
      <div><Stars n={13} /> IMPORTANT <Stars n={14} /></div>
      <div>Error: failed to run job!</div>
      <div>Could not find MPI executable: "C:\Program Files\Microsoft MPI\Bin\mpiexec.exe"</div>
      <div>Check resource configuration.</div>
      <div><Stars n={39} /></div>
    </div>
  </div>
);

export default function App() {
  return (
    <div className="relative w-[1920px] h-[1170px] overflow-hidden bg-[#f0f0f0] text-[#111] text-[12px] font-['Liberation_Sans',sans-serif]">
      <div className="absolute left-[840px] top-0 w-[48px] h-px bg-[#0078d7]" />
      <div className="absolute left-[888px] top-0 w-[193px] h-px bg-[#e4e4e4]" />

      <div className="h-[24px] bg-white flex items-center pl-[2px] text-[11.8px]">
        <Logo />
        <span className="ml-[5px] flex-1 text-[#888]">Lumerical 2020a Finite Difference IDE - Layout - FirstRun.fsp [C:/Users/labadmin/Documents]</span>
        <WinCtl className="mr-[33px]" />
        <div className="mr-[33px] relative w-3 h-3"><Restore className="opacity-50" /></div>
        <WinCtl close className="mr-[19px]" />
      </div>
      <div className="h-[19px] bg-white flex items-center gap-[16px] pl-[8px] text-[#888] text-[11.8px]">
        <span>File</span><span>Edit</span><span>View</span><span>Setting</span><span>Simulation</span><span>Help</span>
      </div>
      <TopToolbar />

      <div className="flex h-[1052px]">
        <LeftToolbar />
        <div className="flex-1 flex flex-col min-w-0">
          <div className="h-[824px] flex mt-[3px]">
            <div className="w-[260px] shrink-0 flex flex-col">
              <ObjectsTree />
              <ResultView />
            </div>
            <div className="ml-[6px] w-[1271px] shrink-0 grid grid-cols-[635px_634px] gap-x-[2px] content-start gap-y-[3px]">
              <View title="XY view"><XYDrawing /></View>
              <View title="Perspective view"><Perspective /></View>
              <View title="XZ view" lower><XZDrawing /></View>
              <View title="YZ view" lower><YZDrawing /></View>
            </div>
            <div className="ml-[6px] flex"><ScriptEditor /></div>
          </div>
          <BottomDock />
        </div>
      </div>
      <StatusBar />

      <JobManager />
      <JobDetails />
    </div>
  );
}
